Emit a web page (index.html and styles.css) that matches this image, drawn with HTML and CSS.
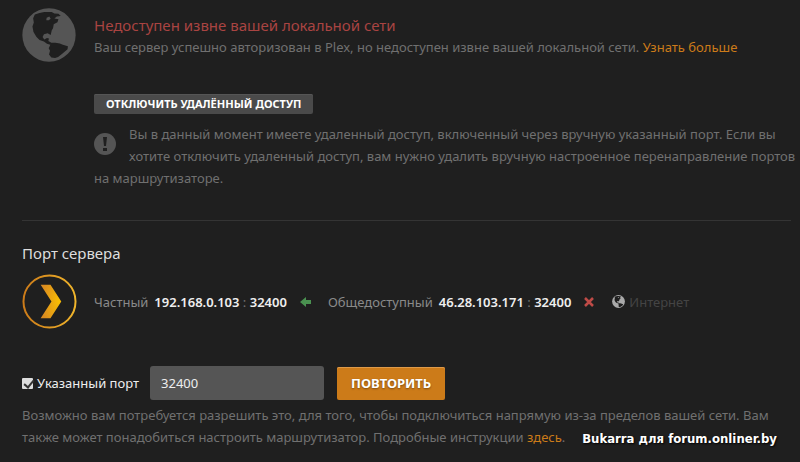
FILE: index.html
```html
<!DOCTYPE html>
<html lang="ru">
<head>
    <meta charset="UTF-8">
    <meta name="viewport" content="width=device-width, initial-scale=1.0">
    <title>Plex - Удалённый доступ</title>
    <link rel="stylesheet" href="styles.css">
</head>
<body>
    <svg class="sprite" aria-hidden="true">
        <symbol id="globe" viewBox="0 0 160 160">
            <circle cx="80" cy="80" r="79" fill="currentColor"/>
            <path class="land" d="M33 30 L38 19 L52 15 L66 12 L88 12 L96 16 L108 17 L115 24 L103 25 L96 31 L108 33 L105 42 L94 48 L92 60 L88 67 L85 80 L76 75 L65 78 L61 86 L66 93 L74 89 L80 90 L78 98 L87 103 L99 103 L112 105 L121 109 L136 113 L135 122 L121 134 L107 145 L98 148 L87 147 L80 138 L83 127 L79 119 L84 109 L74 106 L65 99 L52 95 L43 86 L34 71 L31 55 L35 43 Z"/>
            <path d="M73 29 L81 25 L85 32 L79 36 L72 36 Z" fill="currentColor"/>
        </symbol>
    </svg>

    <div class="settings">
        <section class="row status">
            <svg class="status-icon"><use href="#globe"/></svg>
            <div class="content">
                <h2 class="status-title">Недоступен извне вашей локальной сети</h2>
                <p>Ваш сервер успешно авторизован в Plex, но недоступен извне вашей локальной сети. <a href="#">Узнать больше</a></p>
                <button class="btn btn-disable" type="button">Отключить удалённый доступ</button>
                <p class="note">
                    <svg class="note-icon" viewBox="0 0 22 22">
                        <circle cx="11" cy="11" r="11" fill="currentColor"/>
                        <path class="land" d="M9 4h4l-1 9h-2z M9 15h4v3h-4z"/>
                    </svg>
                    Вы в данный момент имеете удаленный доступ, включенный через вручную указанный порт. Если вы хотите отключить удаленный доступ, вам нужно удалить вручную настроенное перенаправление портов на маршрутизаторе.
                </p>
            </div>
        </section>

        <section class="server">
            <h3 class="server-title">Порт сервера</h3>
            <div class="row mapping">
                <svg class="plex-icon" viewBox="0 0 56 56">
                    <defs>
                        <linearGradient id="ring" x1="0" y1="0" x2="1" y2="0">
                            <stop offset="0" stop-color="#cc7b19"/>
                            <stop offset="1" stop-color="#f0b52b"/>
                        </linearGradient>
                        <radialGradient id="chevron" cx="0.9" cy="0.5" r="0.9">
                            <stop offset="0" stop-color="#f9be03"/>
                            <stop offset="1" stop-color="#d98a20"/>
                        </radialGradient>
                    </defs>
                    <circle cx="28" cy="28" r="26.5" fill="none" stroke="url(#ring)" stroke-width="2"/>
                    <path d="M19 11h10l11 17-11 17H19l11-17z" fill="url(#chevron)"/>
                </svg>
                <div class="addresses">
                    <span class="label">Частный</span>
                    <span class="address"><b>192.168.0.103</b> : <b>32400</b></span>
                    <svg class="arrow" viewBox="0 0 12 10"><path d="M0 5l6-5v3h5v4H6v3z" fill="#4a9150"/></svg>
                    <span class="label">Общедоступный</span>
                    <span class="address"><b>46.28.103.171</b> : <b>32400</b></span>
                    <svg class="cross" viewBox="0 0 10 10"><path d="M1 1l8 8M9 1L1 9" stroke="#bf4b47" stroke-width="2.5"/></svg>
                    <svg class="net-icon"><use href="#globe"/></svg>
                    <span class="internet">Интернет</span>
                </div>
            </div>
        </section>

        <form class="port-form">
            <div class="port-row">
                <input class="port-check" type="checkbox" id="manualPort" checked>
                <label class="port-label" for="manualPort">Указанный порт</label>
                <input class="port-input" type="text" value="32400" aria-label="Номер порта">
                <button class="btn btn-retry" type="button">Повторить</button>
            </div>
            <p class="help">Возможно вам потребуется разрешить это, для того, чтобы подключиться напрямую из-за пределов вашей сети. Вам также может понадобиться настроить маршрутизатор. Подробные инструкции <a href="#">здесь</a>.</p>
        </form>
    </div>

    <div class="watermark">Bukarra для forum.onliner.by</div>
</body>
</html>
```
FILE: styles.css
```css
* {
    margin: 0;
    padding: 0;
    box-sizing: border-box;
}

body {
    font-family: 'Noto Sans', 'Open Sans', sans-serif;
    font-size: 13px;
    line-height: 22px;
    color: #707070;
    background: #1f1f1f;
    position: relative;
}

a {
    color: #cc7b19;
    text-decoration: none;
}

a:hover {
    color: #f9be03;
}

svg {
    flex: none;
}

.sprite {
    position: absolute;
    width: 0;
    height: 0;
}

.land {
    fill: #1f1f1f;
}

.settings {
    padding: 8px 9px 14px 22px;
}

.row {
    display: flex;
    gap: 18px;
}

/* Connection status */
.status {
    padding-bottom: 31px;
    border-bottom: 1px solid #343434;
}

.status-icon {
    width: 54px;
    height: 54px;
    color: #555;
}

.content {
    flex: 1;
    padding-top: 6px;
}

.status-title {
    font-size: 15px;
    font-weight: 400;
    color: #a94442;
}

.btn {
    font-family: inherit;
    font-weight: 700;
    color: #fff;
    text-transform: uppercase;
    border: none;
    border-radius: 2px;
    cursor: pointer;
}

.btn-disable {
    display: block;
    height: 20px;
    margin: 36px 0 9px;
    padding: 0 12px;
    font-size: 11px;
    line-height: 20px;
    background: #4a4a4a;
    box-shadow: inset 0 1px #555;
}

.note {
    margin-right: -8px;
}

.note-icon {
    float: left;
    width: 22px;
    height: 22px;
    margin: 10px 13px 0 0;
    color: #555;
}

/* Port mapping */
.server {
    padding-top: 21px;
}

.server-title {
    font-size: 15px;
    font-weight: 400;
    color: #ddd;
}

.mapping {
    gap: 17px;
    align-items: center;
    margin-top: 10px;
}

.plex-icon {
    width: 55px;
    height: 55px;
}

.addresses {
    display: flex;
    align-items: center;
}

.label {
    margin-right: 6px;
    color: #8a8a8a;
}

.address b {
    font-weight: 600;
    color: #eee;
}

.arrow {
    width: 12px;
    height: 10px;
    margin: 0 16px 0 13px;
}

.cross {
    width: 10px;
    height: 10px;
    margin: 0 18px 0 13px;
}

.net-icon {
    width: 13px;
    height: 13px;
    margin-right: 4px;
    color: #aaa;
}

.internet {
    color: #444;
}

/* Manual port */
.port-form {
    padding-top: 37px;
}

.port-row {
    display: flex;
    align-items: center;
}

.port-check {
    appearance: none;
    width: 11px;
    height: 11px;
    margin-right: 4px;
    background: #ddd;
    border-radius: 1px;
}

.port-check:checked::after {
    content: "";
    display: block;
    width: 4px;
    height: 8px;
    margin-left: 4px;
    border: solid #333;
    border-width: 0 2px 2px 0;
    transform: rotate(40deg);
}

.port-label {
    margin-right: 11px;
    color: #eee;
}

.port-input {
    width: 174px;
    height: 34px;
    margin-right: 13px;
    padding: 0 11px;
    font: inherit;
    color: #eee;
    background: #555;
    border: none;
    border-radius: 3px;
}

.btn-retry {
    height: 33px;
    padding: 0 14px;
    font-size: 13px;
    background: #cc7b19;
    box-shadow: inset 0 1px #dd9a4a;
    text-shadow: 0 1px 2px rgba(0,0,0,0.4);
}

.help {
    margin-top: 4px;
}

.watermark {
    position: absolute;
    right: 23px;
    bottom: 15px;
    font-family: 'DejaVu Sans Condensed', 'DejaVu Sans', sans-serif;
    font-size: 13px;
    font-weight: 700;
    line-height: 16px;
    color: #fff;
    text-shadow: 1px 1px 2px #000;
}
```
